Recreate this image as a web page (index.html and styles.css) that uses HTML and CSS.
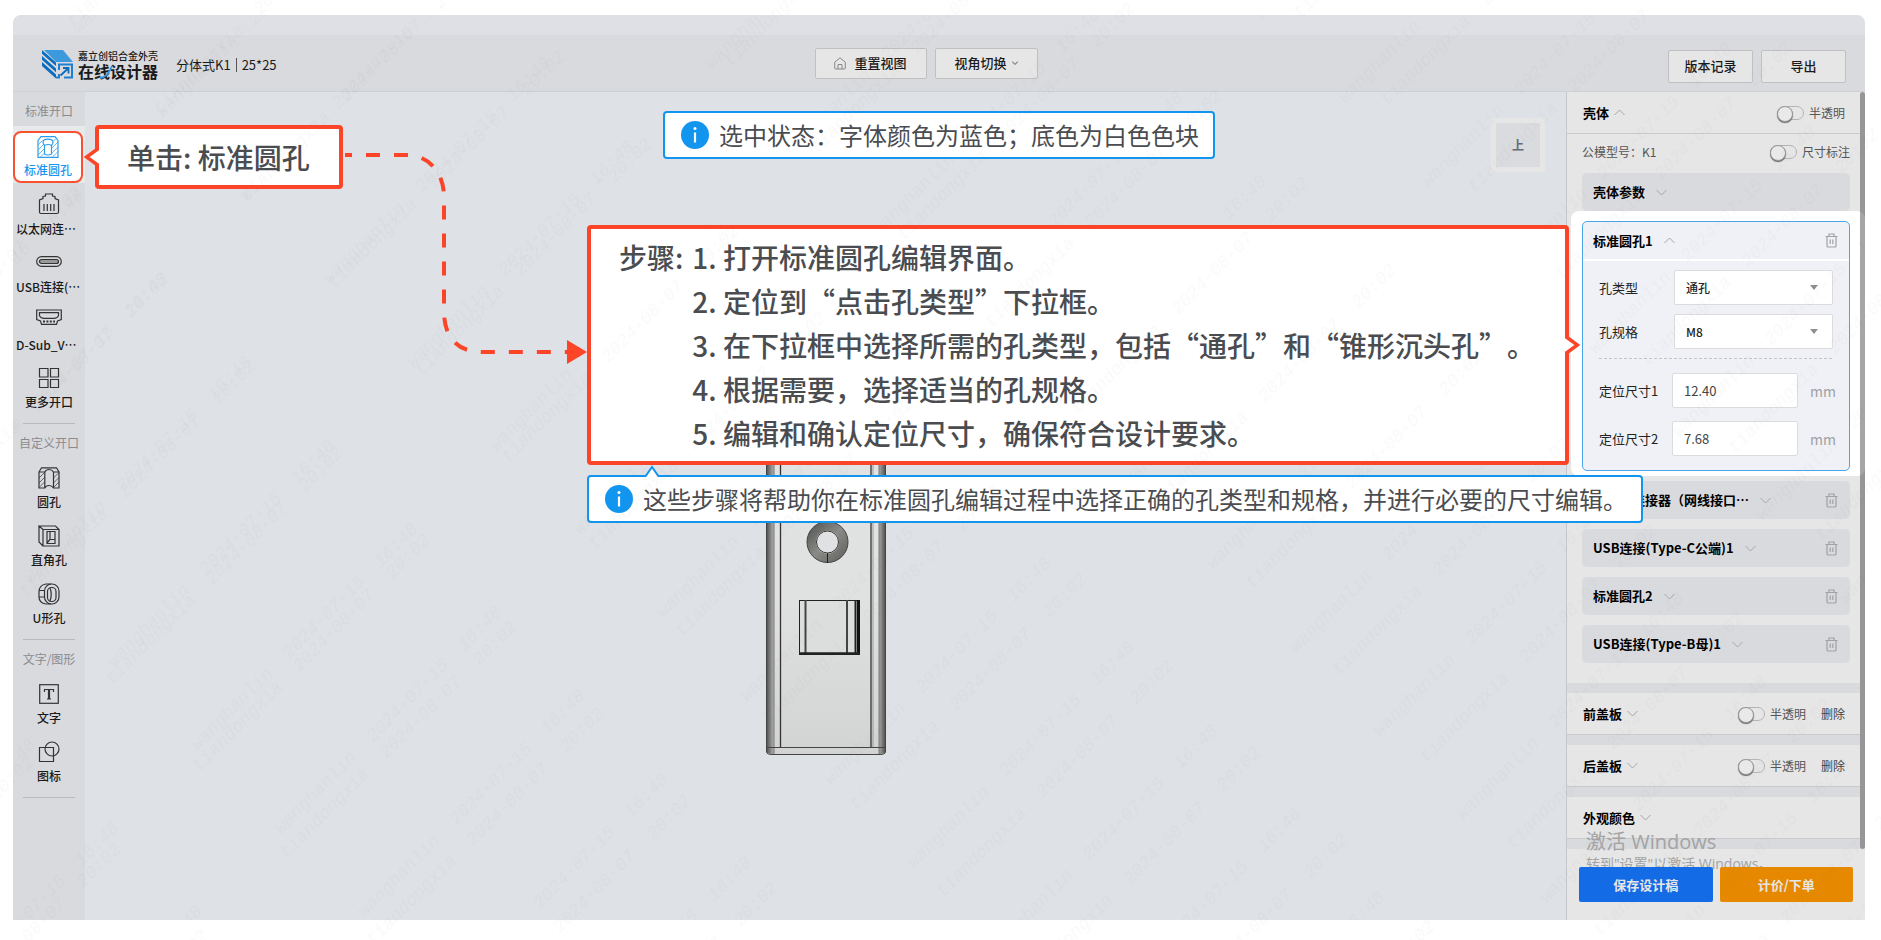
FILE: index.html
```html
<!DOCTYPE html>
<html lang="zh-CN">
<head>
<meta charset="UTF-8">
<meta name="viewport" content="width=device-width, initial-scale=1.0">
<title>在线设计器 - 标准圆孔</title>
<link rel="stylesheet" href="styles.css">
</head>
<body>
<svg class="sprite" aria-hidden="true">
  <symbol id="up" viewBox="0 0 11 7"><path d="M0.5 6 L5.5 1 L10.5 6"/></symbol>
  <symbol id="down" viewBox="0 0 11 7"><path d="M0.5 1 L5.5 6 L10.5 1"/></symbol>
  <symbol id="trash" viewBox="0 0 13 15"><path d="M0.5 3.5 H12.5 M4 3.5 V1 H9 V3.5 M2 3.5 V13 Q2 14 3 14 H10 Q11 14 11 13 V3.5 M5.2 6.5 V11 M7.8 6.5 V11"/></symbol>
  <symbol id="info" viewBox="0 0 28 28"><circle cx="14" cy="14" r="14" fill="#1295ee"/><path d="M14 11.5 V21.5" stroke="#fff" stroke-width="2.2"/><circle cx="14" cy="7.5" r="1.5" fill="#fff"/></symbol>
</svg>
<div class="frame">
  <header class="header">
    <div class="brand">
      <svg class="logo" width="31" height="29" viewBox="0 0 31 29">
        <path d="M2 0 H21 L31 12 H14 Z" fill="#3c99dc"/>
        <path d="M0 0 L14 12.5 V16 L0 3.8 Z M0 6 L14 18.5 V22.2 L0 9.8 Z M0 12 L14 24.5 V28.5 L0 16 Z" fill="#0c6cc0"/>
        <path d="M17 20 V14.5 H30 V27.5 H22 M17 24 V27.5 H14" fill="none" stroke="#1d7fd0" stroke-width="2"/>
        <path d="M18.5 25.5 L26 18.5 M21 18 H26.5 V23.5" fill="none" stroke="#0c6cc0" stroke-width="1.8"/>
      </svg>
      <div class="brand-text">
        <span class="brand-top">嘉立创铝合金外壳</span>
        <span class="brand-main">在线设计器
          <svg class="swoosh" width="14" height="14" viewBox="0 0 14 14"><path d="M1 13 Q9 12 13 1" fill="none" stroke="#3c99dc" stroke-width="2"/></svg>
        </span>
      </div>
      <div class="model"><span>分体式K1</span><i></i><span>25*25</span></div>
    </div>
    <div class="view-tools">
      <button class="btn btn-view">
        <svg width="12" height="13" viewBox="0 0 12 13"><path d="M0.7 5.2 L6 0.8 L11.3 5.2 V11 Q11.3 12 10.3 12 H1.7 Q0.7 12 0.7 11 Z M4 12 V7.5 H8 V12" fill="none" stroke="#888"/></svg>
        重置视图
      </button>
      <button class="btn btn-view btn-switch">视角切换
        <svg class="mini-caret" width="6" height="4"><use href="#down"/></svg>
      </button>
    </div>
    <div class="header-actions">
      <button class="btn">版本记录</button>
      <button class="btn">导出</button>
    </div>
  </header>

  <div class="workspace">
    <nav class="sidebar">
      <h3>标准开口</h3>
      <div class="tool-active">
        <button class="tool">
          <svg class="icon" viewBox="0 0 22 22"><path d="M1 4.5 L4 0.7 H18 L21 4.5 V21.3 H1 Z M6 6 Q6.5 3.2 11 3.2 Q15.5 3.2 16 6 Q16 8 14.5 9.5 V18 Q11 20 7.5 18 V9.5 Q6 8 6 6 M7.5 9.5 Q11 7.5 14.5 9.5"/><path class="hatch" d="M1 9 L5.5 4.5 M1 14 L7 8 M1 19 L7.5 12.5 M3.5 21 L7.5 17 M15 12 L21 6 M15 17 L21 11 M15.5 21 L21 15.5 M16.5 5 L19 2.5"/></svg>
          <span>标准圆孔</span>
        </button>
      </div>
      <button class="tool tool-long">
        <svg class="icon" viewBox="0 0 22 22"><path d="M4.5 20.500 H3 Q1.500 20.500 1.500 19 V7 L5 5.500 V3.500 L7.500 3 V1 H14.500 V3 L17 3.500 V5.500 L20.500 7 V19 Q20.500 20.500 19 20.500 H4.500 M6 11 V18 M9.300 11 V18 M12.700 11 V18 M16 11 V18"/></svg>
        <span>以太网连…</span>
      </button>
      <button class="tool tool-long">
        <svg class="icon icon-wide" viewBox="0 0 26 22"><rect x="0.7" y="5.7" width="24.6" height="9.6" rx="4.8"/><rect x="3.5" y="8.5" width="19" height="4" rx="2" fill="#999"/></svg>
        <span>USB连接(…</span>
      </button>
      <button class="tool tool-long">
        <svg class="icon icon-wide" viewBox="0 0 26 22"><path d="M0.7 1 H25.3 V10.5 L21.5 12 L20.5 15.3 H5.5 L4.5 12 L0.7 10.5 Z M3.5 3.7 H22.5 V6.5 Q22 9 18.5 9.3 H7.5 Q4 9 3.5 6.5 Z"/><path d="M7 12.5 H19" stroke-width="2" stroke-dasharray="2 1.4"/></svg>
        <span>D-Sub_V…</span>
      </button>
      <button class="tool">
        <svg class="icon" viewBox="0 0 22 22"><path d="M1.5 1.5 H10 V10 H1.5 Z M12.5 1.5 H20.5 V10 H12.5 Z M1.5 12.5 H10 V20.5 H1.5 Z M12.5 12.5 H20.5 V20.5 H12.5 Z"/></svg>
        <span>更多开口</span>
      </button>
      <hr>
      <h3>自定义开口</h3>
      <button class="tool">
        <svg class="icon" viewBox="0 0 22 22"><path d="M1 5 L3.5 0.8 H18.5 L21 5 V21 H15.5 Q14 18.5 11 18.5 Q8 18.5 6.8 21 H1 Z M1 5 H6.8 M15.5 5 H21 M6.8 21 V5 Q8 2.5 11 2.5 Q14 2.5 15.5 5 V21"/><path class="hatch" d="M1 11 L6.5 5.5 M1 16 L6.5 10.5 M1 20.5 L6.5 15 M15.5 11 L21 5.5 M15.5 16 L21 10.5 M15.5 20.5 L21 15"/></svg>
        <span>圆孔</span>
      </button>
      <button class="tool">
        <svg class="icon" viewBox="0 0 22 22"><path d="M5 4.5 H21 V21 H5 Z M5 4.5 L1 1 H17.5 L21 4.5 M1 1 V17 L5 21 M9 6.5 H17 V18.5 H9 Z M12 6.5 V14.5 H17 M12 14.5 L9 18"/></svg>
        <span>直角孔</span>
      </button>
      <button class="tool">
        <svg class="icon" viewBox="0 0 22 22"><rect x="6.5" y="1" width="14.5" height="20" rx="7"/><rect x="9.5" y="4.5" width="8.5" height="14" rx="4"/><path d="M13 1 H8 Q1 2 1 9 V14 Q1 20 8 21 H13 M1 7.5 H6.5 M1 14 H6.5 M12 5 Q14.5 11 12 18"/></svg>
        <span>U形孔</span>
      </button>
      <hr>
      <h3>文字/图形</h3>
      <button class="tool">
        <svg class="icon" viewBox="0 0 22 22"><rect x="1.7" y="1.7" width="18.6" height="18.6"/><path d="M6.5 9 V6.5 H15.5 V9 M9 16 H13" /><path d="M11 6.5 V16" stroke-width="2.2"/></svg>
        <span>文字</span>
      </button>
      <button class="tool">
        <svg class="icon" viewBox="0 0 22 22"><path d="M1.5 6.5 H15.5 V20.5 H1.5 Z"/><circle cx="14" cy="8" r="7"/></svg>
        <span>图标</span>
      </button>
      <hr>
    </nav>

    <main class="canvas">
      <svg class="shell-part" width="120" height="400" viewBox="0 0 120 400">
        <defs>
          <linearGradient id="edgeLeft"><stop offset="0" stop-color="#565755"/><stop offset="1" stop-color="#b4b5b3"/></linearGradient>
          <linearGradient id="edgeRight"><stop offset="0" stop-color="#a8a9a7"/><stop offset="1" stop-color="#565755"/></linearGradient>
          <linearGradient id="face" x1="0" y1="0" x2="0" y2="1"><stop offset="0" stop-color="#e2e3e3"/><stop offset="0.6" stop-color="#e0e2e1"/><stop offset="1" stop-color="#d2d4d3"/></linearGradient>
          <linearGradient id="ring" x1="0" y1="0" x2="1" y2="1"><stop offset="0" stop-color="#5a5a58"/><stop offset="0.5" stop-color="#8a8a87"/><stop offset="1" stop-color="#666664"/></linearGradient>
        </defs>
        <path d="M0.5 0 H119.5 V397 Q119 399.5 114 399.5 H6 Q1 399.5 0.5 397 Z" fill="url(#face)" stroke="#444"/>
        <path d="M1 0 H8 V399 H6 Q1 399 1 397 Z" fill="url(#edgeLeft)"/>
        <path d="M113 0 H119 V397 Q119 399 113 399 Z" fill="url(#edgeRight)"/>
        <path d="M8 0 V399 M113 0 V399" stroke="#777"/>
        <path d="M14.5 0 V392 M105 0 V392" stroke="#333" stroke-width="1.3"/>
        <path d="M107 0 V392" stroke="#999"/>
        <path d="M0 392.5 H120" stroke="#444"/>
        <circle cx="61.5" cy="187" r="16" fill="none" stroke="url(#ring)" stroke-width="9"/>
        <circle cx="61.5" cy="187" r="20.5" fill="none" stroke="#444"/>
        <circle cx="61.5" cy="187" r="11" fill="#dfe1e3" stroke="#333"/>
        <path d="M61.5 198 V208" stroke="#222"/>
        <rect x="33.5" y="245.5" width="60" height="54" fill="#dcdedd" stroke="#222"/>
        <path d="M39.5 245 V298 M81 245 V298" stroke="#444" stroke-width="2"/>
        <path d="M89.5 245 V298" stroke="#222" stroke-width="2"/>
        <path d="M92.5 245 V300" stroke="#111" stroke-width="3"/>
        <path d="M33 298.5 H94" stroke="#222" stroke-width="2.5"/>
      </svg>
      <div class="view-cube"><span>上</span></div>
    </main>

    <aside class="panel">
      <div class="scrollbar"></div>
      <section class="section">
        <div class="section-head">
          <button class="fold">壳体 <svg class="caret"><use href="#up"/></svg></button>
          <label class="switch"><input type="checkbox">半透明</label>
        </div>
        <div class="model-row">
          <span>公模型号：K1</span>
          <label class="switch"><input type="checkbox">尺寸标注</label>
        </div>
        <div class="card card-first"><button class="fold">壳体参数 <svg class="caret"><use href="#down"/></svg></button></div>

        <div class="spotlight">
          <div class="editor">
            <div class="editor-head">
              <button class="fold">标准圆孔1 <svg class="caret"><use href="#up"/></svg></button>
              <button class="trash" aria-label="删除"><svg width="13" height="15"><use href="#trash"/></svg></button>
            </div>
            <div class="editor-body">
              <div class="field">
                <label for="holeType">孔类型</label>
                <div class="select"><select id="holeType"><option>通孔</option><option>锥形沉头孔</option></select></div>
              </div>
              <div class="field">
                <label for="holeSpec">孔规格</label>
                <div class="select"><select id="holeSpec"><option>M8</option></select></div>
              </div>
              <div class="dash"></div>
              <div class="field field-size">
                <label for="size1">定位尺寸1</label>
                <input type="text" id="size1" value="12.40">
                <span class="unit">mm</span>
              </div>
              <div class="field field-size">
                <label for="size2">定位尺寸2</label>
                <input type="text" id="size2" value="7.68">
                <span class="unit">mm</span>
              </div>
            </div>
          </div>
        </div>

        <div class="card-list">
          <div class="card">
            <button class="fold">以太网连接器（网线接口… <svg class="caret"><use href="#down"/></svg></button>
            <button class="trash" aria-label="删除"><svg width="13" height="15"><use href="#trash"/></svg></button>
          </div>
          <div class="card">
            <button class="fold">USB连接(Type-C公端)1 <svg class="caret"><use href="#down"/></svg></button>
            <button class="trash" aria-label="删除"><svg width="13" height="15"><use href="#trash"/></svg></button>
          </div>
          <div class="card">
            <button class="fold">标准圆孔2 <svg class="caret"><use href="#down"/></svg></button>
            <button class="trash" aria-label="删除"><svg width="13" height="15"><use href="#trash"/></svg></button>
          </div>
          <div class="card">
            <button class="fold">USB连接(Type-B母)1 <svg class="caret"><use href="#down"/></svg></button>
            <button class="trash" aria-label="删除"><svg width="13" height="15"><use href="#trash"/></svg></button>
          </div>
        </div>
      </section>
      <section class="section">
        <div class="section-head">
          <button class="fold">前盖板 <svg class="caret"><use href="#down"/></svg></button>
          <label class="switch"><input type="checkbox">半透明</label>
          <button class="delete">删除</button>
        </div>
      </section>
      <section class="section">
        <div class="section-head">
          <button class="fold">后盖板 <svg class="caret"><use href="#down"/></svg></button>
          <label class="switch"><input type="checkbox">半透明</label>
          <button class="delete">删除</button>
        </div>
      </section>
      <section class="section">
        <div class="section-head">
          <button class="fold">外观颜色 <svg class="caret"><use href="#down"/></svg></button>
        </div>
      </section>
      <div class="activate">
        <p>激活 Windows</p>
        <p class="activate-sub">转到"设置"以激活 Windows。</p>
      </div>
      <div class="panel-actions">
        <button class="save">保存设计稿</button>
        <button class="order">计价/下单</button>
      </div>
    </aside>
  </div>

  <svg class="watermark">
    <defs>
      <pattern id="wm1" width="423" height="118" patternUnits="userSpaceOnUse" patternTransform="rotate(-45)">
        <text x="33" y="61">wanghanlin</text><text x="163" y="61">2024-07-15</text><text x="292" y="61">16:48</text>
      </pattern>
    </defs>
    <rect width="100%" height="100%" fill="url(#wm1)"/>
  </svg>
</div>

<!-- guide callouts -->
<svg class="route" width="244" height="216" viewBox="0 0 244 216">
  <path d="M0 6 H62 C84 6 99 24 99 48 V162 C99 190 114 203 137 203 H224" fill="none" stroke="#fc4528" stroke-width="4" stroke-dasharray="14 14" stroke-dashoffset="7"/>
  <path d="M222 191 L242 203 L222 215 Z" fill="#fc4528"/>
</svg>
<div class="callout callout-red callout-click">
  单击: 标准圆孔
  <svg class="tip tip-left" width="15" height="20" viewBox="0 0 15 20"><path d="M15 1 L2.5 10 L15 19" fill="#fff" stroke="#fc4528" stroke-width="3.5"/></svg>
</div>
<div class="callout callout-blue callout-state">
  <svg class="info"><use href="#info"/></svg>选中状态：字体颜色为蓝色；底色为白色色块
</div>
<div class="callout callout-red callout-steps">
  <span>步骤:</span>
  <ol>
    <li>打开标准圆孔编辑界面。</li>
    <li>定位到“点击孔类型”下拉框。</li>
    <li>在下拉框中选择所需的孔类型，包括“通孔”和“锥形沉头孔”。</li>
    <li>根据需要，选择适当的孔规格。</li>
    <li>编辑和确认定位尺寸，确保符合设计要求。</li>
  </ol>
  <svg class="tip tip-right" width="15" height="20" viewBox="0 0 15 20"><path d="M0 1 L12.5 10 L0 19" fill="#fff" stroke="#fc4528" stroke-width="3.5"/></svg>
</div>
<div class="callout callout-blue callout-note">
  <svg class="info"><use href="#info"/></svg>这些步骤将帮助你在标准圆孔编辑过程中选择正确的孔类型和规格，并进行必要的尺寸编辑。
  <svg class="tip tip-top" width="16" height="12" viewBox="0 0 16 12"><path d="M1 12 L8 2 L15 12" fill="#fff" stroke="#1295ee" stroke-width="2"/></svg>
</div>

<svg class="watermark watermark-page">
  <defs>
    <pattern id="wm2" width="437" height="123" patternUnits="userSpaceOnUse" patternTransform="rotate(-45)">
      <text x="32" y="72">tiandongxia</text><text x="173" y="72">2024-08-07</text><text x="305" y="72">20:02</text>
    </pattern>
  </defs>
  <rect width="100%" height="100%" fill="url(#wm2)"/>
</svg>
</body>
</html>
```
FILE: styles.css
```css
* {
  box-sizing: border-box;
}
body {
  margin: 0;
  padding: 15px 16px 20px 13px;
  position: relative;
  background: #fff;
  color: #1a1a1a;
  font-family: "Noto Sans CJK SC", sans-serif;
  font-size: 13px;
  line-height: 20px;
}
button, input, select {
  font: inherit;
  color: inherit;
}
button {
  margin: 0;
  padding: 0;
  border: none;
  background: none;
  cursor: pointer;
}
h3, p, ol {
  margin: 0;
  padding: 0;
}
.sprite {
  position: absolute;
  width: 0;
  height: 0;
}
.frame {
  position: relative;
  padding-top: 20px;
  background: #dee0e5;
  border-radius: 8px 8px 0 0;
}

/* header */
.header {
  display: grid;
  grid-template-columns: 1fr auto 1fr;
  align-items: center;
  height: 57px;
  padding: 0 19px 0 29px;
  background: #d9dade;
  border-bottom: 1px solid #cfd0d3;
}
.brand {
  display: flex;
  align-items: center;
  margin-top: 3px;
}
.brand-text {
  display: flex;
  flex-direction: column;
  margin: 0 18px 0 5px;
  font-weight: 700;
}
.brand-top {
  font-size: 10px;
  line-height: 13px;
  font-weight: 500;
}
.brand-main {
  position: relative;
  font-size: 16px;
  line-height: 18px;
}
.swoosh {
  position: absolute;
  left: 21px;
  top: 3px;
}
.model {
  display: flex;
  align-items: center;
  gap: 5px;
}
.model i {
  width: 1px;
  height: 14px;
  background: #555;
}
.view-tools {
  display: flex;
  gap: 8px;
  margin-right: 36px;
}
.header-actions {
  display: flex;
  justify-content: flex-end;
  gap: 8px;
  margin-top: 6px;
}
.btn {
  display: flex;
  align-items: center;
  justify-content: center;
  width: 85px;
  height: 33px;
  background: #e6e6e6;
  border: 1px solid #bfc0c2;
  border-radius: 2px;
  font-weight: 500;
}
.btn-view {
  gap: 8px;
  width: 112px;
  height: 31px;
}
.btn-switch {
  gap: 5px;
  width: 103px;
}
.mini-caret {
  fill: none;
  stroke: #888;
  stroke-width: 2;
}

.workspace {
  display: flex;
}

/* left tools */
.sidebar {
  flex: none;
  width: 72px;
  background: #d9dade;
}
.sidebar h3 {
  height: 34px;
  padding-top: 9px;
  font-size: 12px;
  font-weight: 400;
  color: #8a8b8e;
  text-align: center;
}
.sidebar hr {
  width: 52px;
  height: 1px;
  margin: 7px auto 0;
  border: none;
  background: #b9babc;
}
.tool {
  display: flex;
  flex-direction: column;
  align-items: center;
  gap: 3px;
  width: 100%;
  height: 58px;
  padding-top: 9px;
  font-size: 12px;
  font-weight: 500;
}
.tool-long {
  gap: 4px;
  align-items: flex-start;
  padding-left: 3px;
  white-space: nowrap;
}
.tool-long .icon {
  margin-left: 22px;
}
.tool-long .icon-wide {
  margin-left: 20px;
}
.icon {
  flex: none;
  width: 22px;
  height: 22px;
  fill: none;
  stroke: #333;
  stroke-width: 1.2;
}
.icon-wide {
  width: 26px;
}
.hatch {
  stroke-width: 0.7;
}
.tool-active {
  padding: 5px 2px 0 0;
  background: #e8e9ea;
}
.tool-active .tool {
  height: 52px;
  margin-bottom: 1px;
  padding-top: 3px;
  gap: 2px;
  background: #fff;
  border: 2px solid #f9502f;
  border-radius: 8px;
  color: #1a96f0;
}
.tool-active .icon {
  stroke: #2f9cea;
}

/* drawing area */
.canvas {
  position: relative;
  flex: 1;
  display: flex;
  justify-content: center;
  align-items: flex-start;
  background: #dee1e6;
}
.shell-part {
  margin-top: 263px;
}
.view-cube {
  position: absolute;
  top: 26px;
  right: 21px;
  display: flex;
  align-items: center;
  justify-content: center;
  width: 54px;
  height: 54px;
  background: #d9dbde;
  border: 5px solid #e6e6e6;
  font-size: 12px;
  font-weight: 700;
  color: #656b78;
}

/* right panel */
.panel {
  position: relative;
  flex: none;
  width: 299px;
  background: #e6e6e6;
  border-left: 1px solid #c6c8cb;
}
.scrollbar {
  position: absolute;
  z-index: 2;
  top: 0;
  right: 0;
  width: 5px;
  height: 757px;
  border-radius: 3px;
  background: rgba(0, 0, 0, 0.35);
}
.section {
  margin-right: 5px;
  border-bottom: 10px solid #d9dade;
}
.section-head {
  display: flex;
  align-items: center;
  height: 42px;
  padding: 0 15px 0 16px;
  border-bottom: 1px solid #c9cacc;
}
.section-head .fold {
  margin-right: auto;
}
.fold {
  display: flex;
  align-items: center;
  gap: 11px;
  font-weight: 700;
  color: #000;
}
.section-head .fold {
  gap: 5px;
}
.caret {
  width: 11px;
  height: 7px;
  fill: none;
  stroke: #a5a6a8;
}
.switch {
  display: flex;
  align-items: center;
  gap: 5px;
  font-size: 12px;
  color: #555;
}
.switch input {
  appearance: none;
  width: 27px;
  height: 14px;
  margin: 0;
  border: 1px solid #b5b5b5;
  border-radius: 7px;
}
.switch input::before {
  content: "";
  display: block;
  width: 14px;
  height: 14px;
  margin: -1px;
  border-radius: 50%;
  background: #e9e9e9;
  border: 1px solid #999;
  box-shadow: 0 1px 1px #666;
}
.delete {
  margin-left: 15px;
  font-size: 12px;
  color: #444;
}
.model-row {
  display: flex;
  align-items: center;
  justify-content: space-between;
  height: 36px;
  padding: 0 10px 0 15px;
  font-size: 12px;
  color: #555;
}
.card {
  display: flex;
  align-items: center;
  justify-content: space-between;
  height: 38px;
  padding: 0 12px 0 11px;
  background: #d9dade;
  border-radius: 5px;
}
.card-first {
  margin: 3px 10px 0 15px;
}
.trash {
  height: 15px;
  line-height: 0;
}
.trash svg {
  fill: none;
  stroke: #a0a1a4;
  stroke-width: 1.2;
}
.spotlight {
  margin: 0 -5px 0 4px;
  padding: 10px 15px 5px 11px;
  background: #fff;
  border-radius: 8px;
}
.editor {
  border: 1px solid #4aa6ea;
  border-radius: 5px;
  background: #eff1f6;
}
.editor-head {
  display: flex;
  align-items: center;
  justify-content: space-between;
  height: 39px;
  padding: 0 11px 0 10px;
  border-bottom: 2px solid #fff;
}
.editor-body {
  display: flex;
  flex-direction: column;
  padding: 9px 16px 14px;
}
.field {
  display: flex;
  align-items: center;
  justify-content: space-between;
  height: 35px;
  margin-bottom: 9px;
  color: #222;
}
.select {
  position: relative;
  width: 159px;
}
.select::after {
  content: "";
  position: absolute;
  right: 15px;
  top: 15px;
  border: 4px solid transparent;
  border-top: 5px solid #8f8f8f;
  border-bottom: none;
}
.select select,
.field input {
  width: 100%;
  height: 35px;
  padding: 0 11px;
  appearance: none;
  background: #fff;
  border: 1px solid #dcdcde;
  border-radius: 2px;
  font-size: 12px;
}
.select select {
  font-weight: 500;
}
.dash {
  height: 1px;
  margin-bottom: 14px;
  background: repeating-linear-gradient(90deg, #c4c5c9 0 3px, transparent 3px 5px);
}
.field-size {
  justify-content: flex-start;
  margin-bottom: 13px;
}
.field-size:last-child {
  margin-bottom: 0;
}
.field-size label {
  flex: none;
  width: 73px;
}
.field-size input {
  flex: none;
  width: 126px;
  font-size: 13px;
  color: #444;
}
.unit {
  margin-left: 12px;
  font-size: 14px;
  color: #a0a1a4;
}
.card-list {
  display: flex;
  flex-direction: column;
  gap: 10px;
  margin: 5px 10px 20px 15px;
}
.activate {
  position: absolute;
  left: 19px;
  top: 737px;
  font-family: "Open Sans", "Noto Sans CJK SC", sans-serif;
  font-size: 20px;
  line-height: 26px;
  color: #a2a3a4;
  white-space: nowrap;
}
.activate-sub {
  font-size: 14px;
  line-height: 18px;
}
.panel-actions {
  position: relative;
  display: flex;
  gap: 7px;
  padding: 18px 12px;
}
.panel-actions button {
  flex: 1;
  height: 35px;
  border-radius: 2px;
  font-weight: 700;
  color: #e6e6e6;
}
.panel-actions .save {
  background: #146be6;
}
.panel-actions .order {
  background: #e68900;
}

/* guide callouts */
.callout {
  position: absolute;
  z-index: 3;
  display: flex;
  align-items: center;
  background: #fff;
  color: #4a4c50;
  white-space: nowrap;
}
.callout-red {
  border: 4px solid #fc4528;
  border-radius: 4px;
  font-size: 28px;
  font-weight: 500;
  line-height: 44px;
  text-spacing-trim: space-all;
}
.callout-blue {
  height: 48px;
  padding: 0 14px 0 16px;
  border: 2px solid #1295ee;
  border-radius: 4px;
  font-size: 24px;
}
.callout-click {
  left: 95px;
  top: 125px;
  height: 64px;
  padding: 0 29px 0 28px;
}
.callout-state {
  left: 663px;
  top: 111px;
}
.callout-steps {
  left: 587px;
  top: 225px;
  width: 982px;
  height: 240px;
  align-items: flex-start;
  padding: 6px 28px;
}
.callout-steps ol {
  list-style: none;
  margin-left: 9px;
  counter-reset: step;
}
.callout-steps li {
  counter-increment: step;
}
.callout-steps li::before {
  content: counter(step) ". ";
}
.callout-note {
  left: 587px;
  top: 475px;
}
.info {
  flex: none;
  width: 28px;
  height: 28px;
  margin-right: 10px;
}
.tip {
  position: absolute;
}
.tip-left {
  left: -15px;
  top: 18px;
}
.tip-right {
  right: -15px;
  top: 106px;
}
.tip-top {
  left: 55px;
  top: -12px;
}
.route {
  position: absolute;
  z-index: 3;
  left: 345px;
  top: 149px;
}

.watermark {
  position: absolute;
  inset: 0;
  width: 100%;
  height: 100%;
  pointer-events: none;
  font: italic 18px "Liberation Mono", monospace;
  fill: rgba(70, 50, 50, 0.03);
}
.watermark-page {
  z-index: 4;
}
```
